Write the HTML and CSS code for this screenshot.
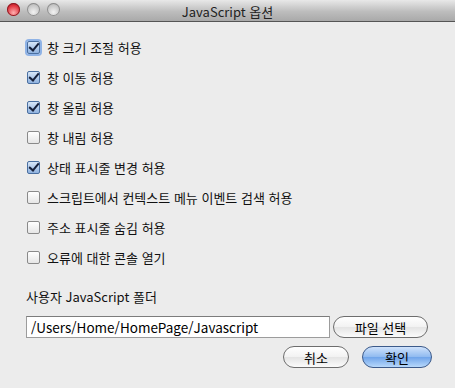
FILE: index.html
```html
<!DOCTYPE html>
<html lang="ko">
<head>
    <meta charset="UTF-8">
    <title>JavaScript 옵션</title>
    <link rel="stylesheet" href="styles.css">
</head>
<body>
    <div class="window">
        <div class="titlebar">
            <div class="lights">
                <span class="light close"></span>
                <span class="light"></span>
                <span class="light"></span>
            </div>
            <div class="title">JavaScript 옵션</div>
        </div>
        <div class="content">
            <ul class="options">
                <li><span class="check on focus"></span>창 크기 조절 허용</li>
                <li><span class="check on"></span>창 이동 허용</li>
                <li><span class="check on"></span>창 올림 허용</li>
                <li><span class="check"></span>창 내림 허용</li>
                <li><span class="check on"></span>상태 표시줄 변경 허용</li>
                <li><span class="check"></span>스크립트에서 컨텍스트 메뉴 이벤트 검색 허용</li>
                <li><span class="check"></span>주소 표시줄 숨김 허용</li>
                <li><span class="check"></span>오류에 대한 콘솔 열기</li>
            </ul>
            <div class="folder-label">사용자 JavaScript 폴더</div>
            <div class="folder-row">
                <input type="text" class="path" value="/Users/Home/HomePage/Javascript">
                <button class="btn btn-file">파일 선택</button>
            </div>
            <div class="actions">
                <button class="btn btn-cancel">취소</button>
                <button class="btn btn-ok">확인</button>
            </div>
        </div>
    </div>
</body>
</html>
```

FILE: styles.css
```css
html, body{
    margin: 0; padding: 0;
}
body{
    width: 455px; height: 388px; overflow: hidden;
    background: #ececec;
    font-family: "Lucida Grande", "Noto Sans CJK KR", "DejaVu Sans", sans-serif;
    font-size: 13px; color: #111;
}
.window{
    height: 388px;
}
/* 제목 표시줄 */
.titlebar{
    position: relative;
    height: 21px;
    background: linear-gradient(#e8e8e8, #bdbdbd 55%, #a9a9a9);
    border-bottom: 1px solid #555;
}
.lights{
    display: flex; gap: 7px;
    padding: 3px 0 0 7px;
}
.light{
    width: 13px; height: 13px; border-radius: 50%;
    background: radial-gradient(circle at 50% 70%, #f2f2f2, #bfbfbf 70%, #9e9e9e);
    box-shadow: inset 0 0 0 1px #8d8d8d;
}
.light.close{
    background: radial-gradient(circle at 50% 75%, #ffb0b0, #e0343e 60%, #a2101c);
    box-shadow: inset 0 0 0 1px #8a1a22;
}
.title{
    position: absolute; left: 0; right: 0; top: 2px;
    text-align: center; font-size: 13px; color: #222;
}
/* 옵션 목록 */
.content{
    padding: 0 26px 0 26px;
}
.options{
    list-style: none; margin: 0; padding: 10px 0 0 1px;
}
.options li{
    display: flex; align-items: center;
    height: 30px;
}
.check{
    width: 11px; height: 11px; margin-right: 7px;
    border: 1px solid #8a8a8a; border-radius: 2px;
    background: linear-gradient(#fff, #e6e6e6);
    position: relative;
}
.check.on{
    border-color: #4a6fa0;
    background: linear-gradient(#d7e6f8, #8fb2df);
}
.check.on::after{ /*체크 표시*/
    content: ""; position: absolute; left: 3px; top: -1px;
    width: 4px; height: 8px;
    border: solid #16203a; border-width: 0 2px 2px 0;
    transform: rotate(40deg);
}
.check.focus{
    box-shadow: 0 0 0 2px #8fb3e6;
}
.folder-label{
    margin-top: 15px; line-height: 19px;
}
.folder-row{
    display: flex; align-items: center; gap: 3px;
    margin-top: 10px;
}
.path{
    width: 304px; height: 22px; box-sizing: border-box;
    border: 1px solid #9c9c9c; border-top-color: #7c7c7c;
    padding: 0 4px; margin: 0;
    font: inherit; font-size: 13.5px; background: #fff;
}
.btn{
    height: 22px; box-sizing: border-box;
    border: 1px solid #6d6d6d; border-radius: 11px;
    background: linear-gradient(#ffffff, #f2f2f2 50%, #e4e4e4 51%, #fbfbfb);
    font: inherit; padding: 0;
}
.btn-file{
    width: 95px;
}
.actions{
    display: flex; justify-content: flex-end; gap: 13px;
    margin-top: 8px; margin-right: -3px;
}
.btn-cancel{
    width: 66px;
}
.btn-ok{
    width: 70px;
    border-color: #3c5a8a;
    background: linear-gradient(#cfe2fb, #8fbaf0 50%, #6fa4ea 51%, #b7d8fb);
}
```
